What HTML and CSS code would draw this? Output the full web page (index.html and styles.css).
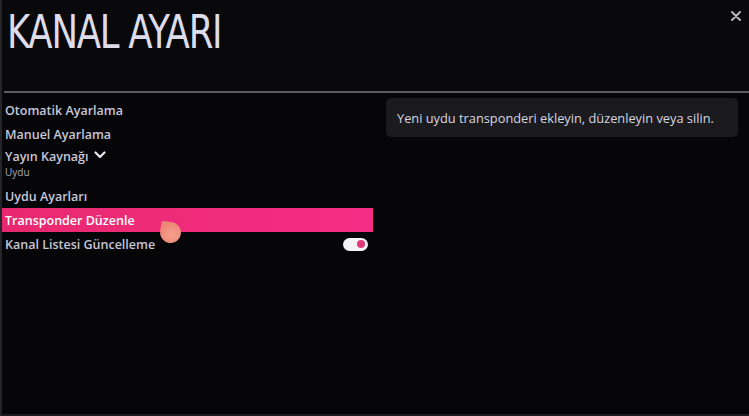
FILE: index.html
```html
<!DOCTYPE html>
<html lang="tr">
<head>
<meta charset="utf-8">
<title>Kanal Ayarı</title>
<link rel="stylesheet" href="styles.css">
</head>
<body>
<div class="screen">
  <header class="header">
    <h1 class="title">KANAL AYARI</h1>
    <button class="close" aria-label="Kapat">
      <svg width="10" height="10" viewBox="0 0 10 10"><path d="M1 1 L9 9 M9 1 L1 9" stroke="#b4b4bc" stroke-width="2" stroke-linecap="round"/></svg>
    </button>
  </header>
  <div class="divider"></div>
  <main class="content">
    <nav class="menu">
      <div class="item">Otomatik Ayarlama</div>
      <div class="item">Manuel Ayarlama</div>
      <div class="group">
        <div class="item item-head">Yayın Kaynağı
          <svg class="chev" width="12" height="8" viewBox="0 0 12 8"><path d="M1.5 1.5 L6 6 L10.5 1.5" fill="none" stroke="#e6e6ee" stroke-width="2.2" stroke-linecap="round" stroke-linejoin="round"/></svg>
        </div>
        <div class="sub">Uydu</div>
      </div>
      <div class="item">Uydu Ayarları</div>
      <div class="item active">Transponder Düzenle</div>
      <div class="item toggle-row">
        <span>Kanal Listesi Güncelleme</span>
        <span class="toggle"><span class="knob"></span></span>
      </div>
      <span class="pointer"></span>
    </nav>
    <aside class="info">
      <div class="info-box">Yeni uydu transponderi ekleyin, düzenleyin veya silin.</div>
    </aside>
  </main>
</div>
</body>
</html>
```

FILE: styles.css
```css
html, body {
  margin: 0;
  padding: 0;
  background: #060508;
}

.screen {
  width: 749px;
  height: 416px;
  box-sizing: border-box;
  border-left: 2px solid #26262a;
  border-bottom: 2px solid #1c1c1f;
  background: #060508;
  font-family: "Open Sans", "Noto Sans", sans-serif;
  overflow: hidden;
  position: relative;
}

.header {
  height: 91px;
  display: flex;
  justify-content: space-between;
  align-items: flex-start;
  background: #09080b;
}

.title {
  margin: 0;
  padding: 8px 0 0 6px;
  font-family: "Liberation Sans Narrow", "DejaVu Sans Condensed", sans-serif;
  font-weight: 400;
  font-size: 47px;
  line-height: 1;
  letter-spacing: -1.5px;
  color: #dcdcea;
  transform: scaleX(0.84);
  transform-origin: 0 0;
}

.close {
  margin: 11px 8px 0 0;
  padding: 0;
  border: 0;
  background: none;
  width: 10px;
  height: 10px;
  display: flex;
}

.divider {
  height: 2px;
  background: #5e5e62;
  margin-left: 2px;
}

.content {
  display: flex;
}

.menu {
  width: 371px;
  padding-top: 5px;
  display: flex;
  flex-direction: column;
  position: relative;
}

.item {
  height: 24px;
  display: flex;
  align-items: center;
  padding-left: 3px;
  font-size: 12.5px;
  font-weight: 600;
  color: #c7c7d7;
}

.group {
  padding-bottom: 6px;
}

.item-head {
  height: 20px;
  gap: 5px;
}

.chev {
  margin-top: -3px;
}

.sub {
  height: 12px;
  line-height: 12px;
  padding-left: 3px;
  font-size: 10px;
  color: #a9a9b8;
}

.active {
  background: linear-gradient(90deg, #e8296f, #f52e85);
  color: #ffffff;
}

.toggle-row {
  justify-content: space-between;
  padding-right: 5px;
}

.toggle {
  width: 25px;
  height: 13px;
  border-radius: 7px;
  background: #f4f4f6;
  display: flex;
  align-items: center;
  justify-content: flex-end;
  padding-right: 3px;
  box-sizing: border-box;
}

.knob {
  width: 8px;
  height: 8px;
  border-radius: 50%;
  background: #e2397a;
}

.pointer {
  position: absolute;
  left: 158px;
  top: 129px;
  width: 21px;
  height: 21px;
  border-radius: 2px 50% 50% 50%;
  background: radial-gradient(circle at 60% 60%, #f5a08c, #ec7b6e);
  transform: rotate(8deg);
}

.info {
  flex: 1;
  padding: 5px 11px 0 13px;
}

.info-box {
  height: 39px;
  border-radius: 5px;
  background: #1b1b1f;
  display: flex;
  align-items: center;
  padding-left: 11px;
  font-size: 12.8px;
  color: #d6d6e0;
}
```
